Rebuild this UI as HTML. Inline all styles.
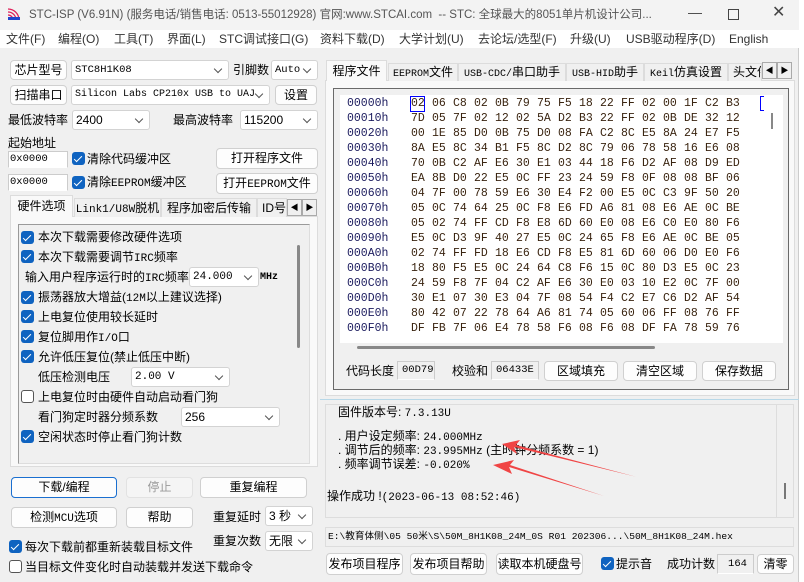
<!DOCTYPE html>
<html><head><meta charset="utf-8">
<style>
*{box-sizing:border-box;margin:0;padding:0}
body{width:804px;height:582px;overflow:hidden;background:#fff;font-family:"Liberation Sans","Noto Sans CJK SC",sans-serif;font-size:12px;color:#000;position:relative}
.a{position:absolute;white-space:nowrap;line-height:15px;font-size:12px}
.m{font-family:"Liberation Mono","Noto Sans CJK SC",monospace}
.btn{position:absolute;background:#fdfdfd;border:1px solid #d0d0d0;border-radius:4px;text-align:center;font-size:12px;white-space:nowrap}
.cb{position:absolute;width:13px;height:13px;background:#0f63c0;border-radius:3px}
.cb:after{content:"";position:absolute;left:4px;top:1.5px;width:3px;height:7px;border:solid #fff;border-width:0 1.6px 1.6px 0;transform:rotate(45deg)}
.cbu{position:absolute;width:13px;height:13px;border:1px solid #555;border-radius:3px;background:#fff}
.combo{position:absolute;background:#fff;border:1px solid #d3d3d3;border-radius:3px;font-size:12px;padding-left:3px;white-space:nowrap;overflow:hidden}
.combo:after{content:"";position:absolute;right:7px;top:5px;width:5px;height:5px;border:solid #555;border-width:0 1px 1px 0;transform:rotate(45deg);background:#fff}
.fld{position:absolute;background:#f0f0f0;border:1px solid #ccc;border-bottom-color:#fff;font-size:10.5px;font-family:"Liberation Mono",monospace;padding-left:4px;white-space:nowrap;overflow:hidden}
.tab{position:absolute;background:#f0f0f0;border:1px solid #dcdcdc;border-bottom:none;font-size:12px;text-align:center;white-space:nowrap;overflow:hidden}
.arr{position:absolute;width:15px;height:17px;background:#f0f0f0;border:1px solid #aaa;font-size:8px;text-align:center;line-height:15px}
.hx{position:absolute;font-family:"Liberation Mono",monospace;font-size:11.5px;line-height:14px;color:#3a2410;white-space:pre}
.ad{position:absolute;font-family:"Liberation Mono",monospace;font-size:11.5px;line-height:14px;color:#1b1b5e}
.s{font-family:"Liberation Mono",monospace;font-size:11px}
.mn{position:absolute;top:32px;font-size:12px;line-height:15px;color:#333;white-space:nowrap}
</style></head><body>
<div class="a" style="left:0;top:0;width:799px;height:582px;background:#f0f0f0;border-right:1px solid #ccc"></div>
<div class="a" style="left:0;top:0;width:799px;height:30px;background:#f3f3f3"></div>
<svg class="a" style="left:6px;top:6px" width="16" height="16" viewBox="0 0 16 16"><g fill="none" stroke="#e0205a" stroke-width="1.3"><path d="M2 3a11 11 0 0 1 11 11M2 6a8 8 0 0 1 8 8M2 9a5 5 0 0 1 5 5"/></g><rect x="2" y="11" width="12" height="3" fill="#2244cc"/></svg>
<div class="a" style="left:29px;top:8px;font-size:11.5px;color:#555">STC-ISP (V6.91N) (服务电话/销售电话: 0513-55012928) 官网:www.STCAI.com &nbsp;-- STC: 全球最大的8051单片机设计公司...</div>
<div class="a" style="left:688px;top:5px;font-size:14px;color:#444">—</div>
<div class="a" style="left:728px;top:9px;width:11px;height:11px;border:1px solid #444"></div>
<div class="a" style="left:772px;top:3px;font-size:16px;line-height:20px;color:#444">✕</div>
<div class="a" style="left:0;top:30px;width:799px;height:18px;background:#fff"></div>
<div class="mn" style="left:6px">文件(F)</div><div class="mn" style="left:58px">编程(O)</div><div class="mn" style="left:114px">工具(T)</div><div class="mn" style="left:167px">界面(L)</div><div class="mn" style="left:219px">STC调试接口(G)</div><div class="mn" style="left:320px">资料下载(D)</div><div class="mn" style="left:399px">大学计划(U)</div><div class="mn" style="left:478px">去论坛/选型(F)</div><div class="mn" style="left:570px">升级(U)</div><div class="mn" style="left:626px">USB驱动程序(D)</div><div class="mn" style="left:729px">English</div>

<div class="btn" style="left:10px;top:60px;width:57px;height:20px;line-height:18px">芯片型号</div>
<div class="combo s" style="left:71px;top:60px;width:158px;height:20px;line-height:18px;font-size:10.5px">STC8H1K08</div>
<div class="a" style="left:233px;top:63px">引脚数</div>
<div class="combo s" style="left:271px;top:60px;width:47px;height:20px;line-height:18px;font-size:10.5px">Auto</div>
<div class="btn" style="left:10px;top:85px;width:57px;height:20px;line-height:18px">扫描串口</div>
<div class="combo s" style="left:71px;top:85px;width:199px;height:20px;line-height:18px;font-size:10px">Silicon Labs CP210x USB to UAJ</div>
<div class="btn" style="left:275px;top:85px;width:42px;height:20px;line-height:18px">设置</div>
<div class="a" style="left:8px;top:113px">最低波特率</div>
<div class="combo" style="left:72px;top:110px;width:78px;height:20px;line-height:18px">2400</div>
<div class="a" style="left:173px;top:113px">最高波特率</div>
<div class="combo" style="left:240px;top:110px;width:78px;height:20px;line-height:18px">115200</div>
<div class="a" style="left:8px;top:136px">起始地址</div>
<div class="fld" style="left:8px;top:151px;width:60px;height:17px;line-height:15px;padding-left:1px;background:#fff">0x0000</div>
<div class="cb" style="left:72px;top:152px"></div>
<div class="a" style="left:87px;top:152px">清除代码缓冲区</div>
<div class="btn" style="left:216px;top:148px;width:102px;height:21px;line-height:19px">打开程序文件</div>
<div class="fld" style="left:8px;top:174px;width:60px;height:17px;line-height:15px;padding-left:1px;background:#fff">0x0000</div>
<div class="cb" style="left:72px;top:176px"></div>
<div class="a" style="left:87px;top:175px">清除<span class="s">EEPROM</span>缓冲区</div>
<div class="btn" style="left:216px;top:173px;width:102px;height:21px;line-height:19px">打开<span class="s">EEPROM</span>文件</div>

<div class="a" style="left:10px;top:216px;width:308px;height:251px;background:#f9f9f9;border:1px solid #dcdcdc"></div>
<div class="tab" style="left:10px;top:195px;width:63px;height:22px;line-height:21px;background:#f9f9f9">硬件选项</div>
<div class="tab" style="left:74px;top:198px;width:87px;height:19px;line-height:18px"><span class="s">Link1/U8W</span>脱机</div>
<div class="tab" style="left:161px;top:198px;width:96px;height:19px;line-height:18px">程序加密后传输</div>
<div class="tab" style="left:257px;top:198px;width:30px;height:19px;line-height:18px;text-align:left;padding-left:4px">ID号</div>
<div class="arr" style="left:287px;top:199px">◀</div><div class="arr" style="left:302px;top:199px">▶</div>
<div class="a" style="left:18px;top:224px;width:292px;height:240px;background:#f0f0f0;border:1px solid #9a9a9a;border-right-color:#ddd;border-bottom-color:#ddd"></div>
<div class="a" style="left:297px;top:245px;width:3px;height:103px;background:#888;border-radius:2px"></div>
<div class="cb" style="left:21px;top:231px"></div><div class="a" style="left:38px;top:230px">本次下载需要修改硬件选项</div>
<div class="cb" style="left:21px;top:250px"></div><div class="a" style="left:38px;top:250px">本次下载需要调节<span class="s">IRC</span>频率</div>
<div class="a" style="left:25px;top:270px">输入用户程序运行时的<span class="s">IRC</span>频率</div>
<div class="combo s" style="left:189px;top:267px;width:70px;height:20px;line-height:18px">24.000</div>
<div class="a s" style="left:260px;top:270px;font-weight:bold;font-size:10px">MHz</div>
<div class="cb" style="left:21px;top:291px"></div><div class="a" style="left:38px;top:290px">振荡器放大增益(<span class="s">12M</span>以上建议选择)</div>
<div class="cb" style="left:21px;top:310px"></div><div class="a" style="left:38px;top:310px">上电复位使用较长延时</div>
<div class="cb" style="left:21px;top:330px"></div><div class="a" style="left:38px;top:330px">复位脚用作<span class="s">I/O</span>口</div>
<div class="cb" style="left:21px;top:350px"></div><div class="a" style="left:38px;top:350px">允许低压复位(禁止低压中断)</div>
<div class="a" style="left:38px;top:370px">低压检测电压</div>
<div class="combo s" style="left:131px;top:367px;width:99px;height:20px;line-height:18px">2.00 V</div>
<div class="cbu" style="left:21px;top:390px"></div><div class="a" style="left:38px;top:390px">上电复位时由硬件自动启动看门狗</div>
<div class="a" style="left:38px;top:410px">看门狗定时器分频系数</div>
<div class="combo" style="left:181px;top:407px;width:99px;height:20px;line-height:18px">256</div>
<div class="cb" style="left:21px;top:430px"></div><div class="a" style="left:38px;top:430px">空闲状态时停止看门狗计数</div>

<div class="btn" style="left:11px;top:477px;width:106px;height:21px;line-height:19px;border:1px solid #1a6fd0">下载/编程</div>
<div class="btn" style="left:126px;top:477px;width:67px;height:21px;line-height:19px;color:#999;background:#f5f5f5;border-color:#e2e2e2">停止</div>
<div class="btn" style="left:200px;top:477px;width:107px;height:21px;line-height:19px">重复编程</div>
<div class="btn" style="left:11px;top:507px;width:106px;height:21px;line-height:19px">检测<span class="s">MCU</span>选项</div>
<div class="btn" style="left:126px;top:507px;width:67px;height:21px;line-height:19px">帮助</div>
<div class="a" style="left:213px;top:510px">重复延时</div>
<div class="combo" style="left:265px;top:506px;width:48px;height:20px;line-height:18px">3 秒</div>
<div class="a" style="left:213px;top:534px">重复次数</div>
<div class="combo" style="left:265px;top:531px;width:48px;height:20px;line-height:18px">无限</div>
<div class="cb" style="left:9px;top:540px"></div><div class="a" style="left:25px;top:540px">每次下载前都重新装载目标文件</div>
<div class="cbu" style="left:9px;top:560px"></div><div class="a" style="left:25px;top:560px">当目标文件变化时自动装载并发送下载命令</div>

<div class="a" style="left:325px;top:80px;width:470px;height:316px;background:#f9f9f9;border:1px solid #dcdcdc"></div>
<div class="tab" style="left:326px;top:60px;width:61px;height:21px;line-height:20px;background:#f9f9f9">程序文件</div>
<div class="tab" style="left:388px;top:63px;width:70px;height:18px;line-height:17px"><span class="s" style="font-size:10px">EEPROM</span>文件</div>
<div class="tab" style="left:458px;top:63px;width:108px;height:18px;line-height:17px"><span class="s" style="font-size:10px">USB-CDC/</span>串口助手</div>
<div class="tab" style="left:566px;top:63px;width:78px;height:18px;line-height:17px"><span class="s" style="font-size:10px">USB-HID</span>助手</div>
<div class="tab" style="left:644px;top:63px;width:84px;height:18px;line-height:17px"><span class="s" style="font-size:10px">Keil</span>仿真设置</div>
<div class="tab" style="left:728px;top:63px;width:34px;height:18px;line-height:17px;text-align:left;padding-left:4px">头文件</div>
<div class="arr" style="left:762px;top:62px">◀</div><div class="arr" style="left:777px;top:62px">▶</div>
<div class="a" style="left:333px;top:88px;width:456px;height:302px;border:1px solid #6a6a6a;background:#f0f0f0"></div>
<div class="a" style="left:340px;top:95px;width:443px;height:248px;background:#fff"></div>
<div class="a" style="left:771px;top:113px;width:2px;height:16px;background:#888"></div>
<div class="a" style="left:760px;top:96px;width:4px;height:15px;border:1px solid #0000ff;border-right:none"></div>
<div class="a" style="left:357px;top:346px;width:298px;height:3px;background:#888;border-radius:2px"></div>
<div class="a" style="left:410px;top:96px;width:15px;height:16px;border:1px solid #0000ff"></div>
<div id="hex"></div>
<div class="a" style="left:346px;top:364px">代码长度</div>
<div class="fld" style="left:397px;top:361px;width:38px;height:19px;line-height:17px">00D79</div>
<div class="a" style="left:452px;top:364px">校验和</div>
<div class="fld" style="left:491px;top:361px;width:48px;height:19px;line-height:17px">06433E</div>
<div class="btn" style="left:544px;top:361px;width:74px;height:20px;line-height:18px">区域填充</div>
<div class="btn" style="left:623px;top:361px;width:74px;height:20px;line-height:18px">清空区域</div>
<div class="btn" style="left:702px;top:361px;width:74px;height:20px;line-height:18px">保存数据</div>
<div class="a" style="left:320px;top:399px;width:479px;height:1px;background:#b8d8e8"></div>

<div class="a" style="left:325px;top:404px;width:469px;height:114px;border:1px solid #ddd;background:#f0f0f0"></div>
<div class="a" style="left:776px;top:405px;width:1px;height:112px;background:#ddd"></div>
<div class="a" style="left:784px;top:483px;width:2px;height:16px;background:#777"></div>
<div class="a" style="left:338px;top:405px">固件版本号: <span class="s">7.3.13U</span></div>
<div class="a" style="left:338px;top:430px;line-height:12px">. 用户设定频率: <span class="s">24.000MHz</span><br>. 调节后的频率: <span class="s">23.995MHz</span> (主时钟分频系数 = 1)<br>. 频率调节误差: <span class="s">-0.020%</span></div>
<div class="a" style="left:327px;top:489px">操作成功 !<span class="s">(2023-06-13 08:52:46)</span></div>
<svg class="a" style="left:0;top:0" width="804" height="582"><g fill="#f04545"><polygon points="637,477 514,447 517,454 502,444 520,440 516,445"/><polygon points="604,496 509,467 512,474 493,465 514,460 510,465"/></g></svg>
<div class="fld" style="left:325px;top:527px;width:469px;height:20px;line-height:18px;font-size:9.6px;font-family:'Liberation Mono','Noto Sans CJK SC',monospace;background:#f0f0f0;border-color:#ddd;padding-left:2px">E:\教育体侧\05 50米\S\50M_8H1K08_24M_0S R01 202306...\50M_8H1K08_24M.hex</div>
<div class="btn" style="left:326px;top:553px;width:77px;height:22px;line-height:20px">发布项目程序</div>
<div class="btn" style="left:410px;top:553px;width:77px;height:22px;line-height:20px">发布项目帮助</div>
<div class="btn" style="left:496px;top:553px;width:87px;height:22px;line-height:20px">读取本机硬盘号</div>
<div class="cb" style="left:601px;top:557px"></div><div class="a" style="left:616px;top:557px">提示音</div>
<div class="a" style="left:667px;top:557px">成功计数</div>
<div class="fld" style="left:717px;top:554px;width:37px;height:20px;line-height:18px;text-align:center">164</div>
<div class="btn" style="left:757px;top:554px;width:37px;height:20px;line-height:18px">清零</div>
<script>
var d=["02 06 C8 02 0B 79 75 F5 18 22 FF 02 00 1F C2 B3","7D 05 7F 02 12 02 5A D2 B3 22 FF 02 0B DE 32 12","00 1E 85 D0 0B 75 D0 08 FA C2 8C E5 8A 24 E7 F5","8A E5 8C 34 B1 F5 8C D2 8C 79 06 78 58 16 E6 08","70 0B C2 AF E6 30 E1 03 44 18 F6 D2 AF 08 D9 ED","EA 8B D0 22 E5 0C FF 23 24 59 F8 0F 08 08 BF 06","04 7F 00 78 59 E6 30 E4 F2 00 E5 0C C3 9F 50 20","05 0C 74 64 25 0C F8 E6 FD A6 81 08 E6 AE 0C BE","05 02 74 FF CD F8 E8 6D 60 E0 08 E6 C0 E0 80 F6","E5 0C D3 9F 40 27 E5 0C 24 65 F8 E6 AE 0C BE 05","02 74 FF FD 18 E6 CD F8 E5 81 6D 60 06 D0 E0 F6","18 80 F5 E5 0C 24 64 C8 F6 15 0C 80 D3 E5 0C 23","24 59 F8 7F 04 C2 AF E6 30 E0 03 10 E2 0C 7F 00","30 E1 07 30 E3 04 7F 08 54 F4 C2 E7 C6 D2 AF 54","80 42 07 22 78 64 A6 81 74 05 60 06 FF 08 76 FF","DF FB 7F 06 E4 78 58 F6 08 F6 08 DF FA 78 59 76"];
var h="",hx="0123456789ABCDEF";
for(var i=0;i<16;i++){var y=97+i*15;h+='<div class="ad" style="left:347px;top:'+y+'px">000'+hx[i]+'0h</div>';var b=d[i].split(" ");for(var j=0;j<16;j++){h+='<div class="hx" style="left:'+(411+j*21)+'px;top:'+y+'px">'+b[j]+'</div>';}}
document.getElementById("hex").innerHTML=h;
</script>
</body></html>
